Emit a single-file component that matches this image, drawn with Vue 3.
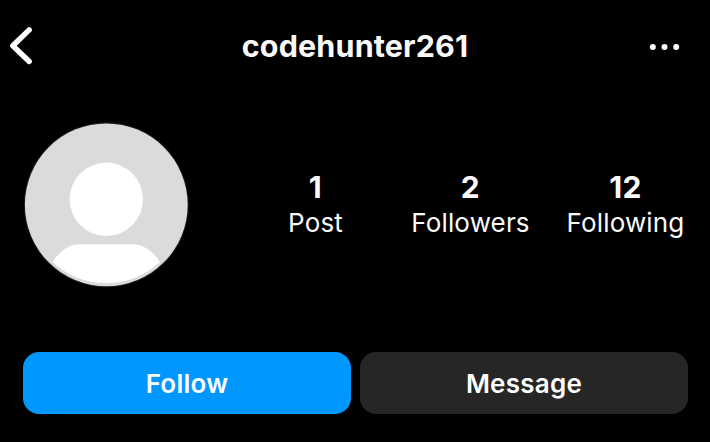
<script setup>
const stats = [
  { value: 1, label: 'Post' },
  { value: 2, label: 'Followers' },
  { value: 12, label: 'Following' },
]
</script>

<template>
  <main class="profile">
    <header class="topbar">
      <svg class="back" width="24" height="38" viewBox="0 0 24 38"><path d="M20.2 2.9L3.8 18.7L20.2 34.5" /></svg>
      <h1>codehunter261</h1>
      <svg class="more" width="32" height="10" viewBox="0 0 32 10"><circle cx="4.8" cy="6" r="3" /><circle cx="16.5" cy="6" r="3" /><circle cx="28.2" cy="6" r="3" /></svg>
    </header>
    <section class="summary">
      <svg class="avatar" width="166" height="166" viewBox="0 0 166 166">
        <circle cx="83.3" cy="82.8" r="82.5" fill="#1a1a1a" />
        <circle cx="83.3" cy="82.8" r="81.4" fill="#dbdbdb" />
        <g fill="#fff">
          <circle cx="83.3" cy="77.3" r="36.7" />
          <path d="M29.5 140C36 129.5 46 122.2 57 122.2H109.5C120.5 122.2 130.5 129.5 137 140A79 79 0 0 1 29.5 140Z" />
        </g>
      </svg>
      <div class="stats">
        <div v-for="s in stats" :key="s.label" class="stat">
          <strong>{{ s.value }}</strong><span>{{ s.label }}</span>
        </div>
      </div>
    </section>
    <div class="actions">
      <button class="follow">Follow</button>
      <button>Message</button>
    </div>
  </main>
</template>

<style>
body { background: #000; }
</style>
<style scoped>
.profile { box-sizing: border-box; height: 442px; overflow: hidden; background: #000; color: #fafafa; font-family: Inter, sans-serif; }
.topbar { display: grid; grid-template-columns: 80px 1fr 80px; align-items: center; height: 92px; }
.back { margin-left: 9px; fill: none; stroke: #fff; stroke-width: 5.4; stroke-linecap: round; stroke-linejoin: round; }
h1 { margin: 0; text-align: center; font-size: 30.5px; font-weight: 700; line-height: 40px; letter-spacing: 0.15px; }
.more { justify-self: end; margin-right: 30px; fill: #fff; }
.summary { display: flex; align-items: center; height: 226px; padding-left: 23px; }
.stats { display: grid; grid-template-columns: repeat(3, 155px); margin-left: 49px; }
.stat { display: flex; flex-direction: column; align-items: center; }
strong { font-size: 30px; font-weight: 700; line-height: 35px; letter-spacing: 0.4px; }
.stat span { font-size: 26px; line-height: 35px; letter-spacing: 0.15px; }
.actions { display: grid; grid-template-columns: 1fr 1fr; gap: 9px; padding: 34px 22px 0 23px; }
button { height: 62px; padding: 0; border: 0; border-radius: 16px; background: #262626; color: #fff; font: 600 26px Inter, sans-serif; letter-spacing: 0.25px; }
.follow { background: #0098ff; }
</style>
